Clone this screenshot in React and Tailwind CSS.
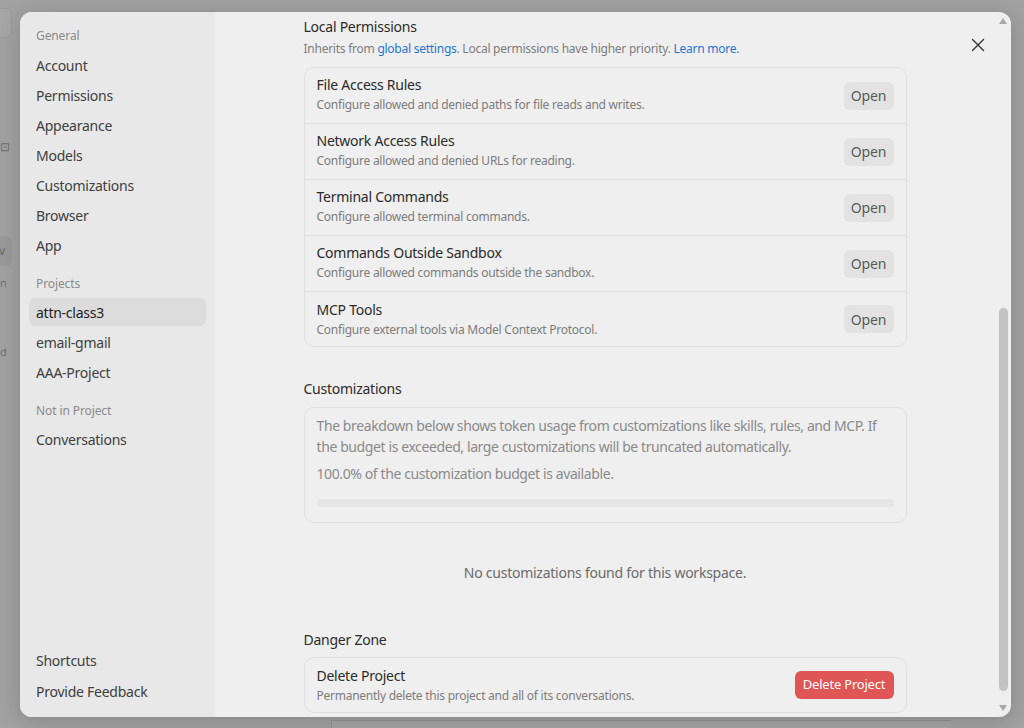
import React from "react";

const FONT = { fontFamily: '"Noto Sans", "Open Sans", sans-serif' };

function NavItem({ label, active }) {
  return (
    <div
      className={
        "h-7 flex items-center px-[7px] rounded-md text-[14px] tracking-[-0.25px] " +
        (active ? "bg-[#dcdcdc] text-[#222222]" : "text-[#404040]")
      }
    >
      {label}
    </div>
  );
}

function NavLabel({ label, first }) {
  return (
    <div
      className={
        "h-[22px] flex items-center px-[7px] text-[12px] text-[#8a8a8a] tracking-[-0.1px] " +
        (first ? "mb-1" : "mt-[14px] mb-[3px]")
      }
    >
      {label}
    </div>
  );
}

function Row({ title, desc, last, action }) {
  return (
    <div
      className={
        "flex items-center justify-between px-3 " +
        (last ? "h-[54px]" : "h-[56px] border-b border-[#e0e0e0]")
      }
    >
      <div className={"flex flex-col " + (last ? "" : "mb-[3px]")}>
        <div className="h-5 leading-5 text-[14px] text-[#2b2b2b] tracking-[-0.25px]">{title}</div>
        <div className="h-4 leading-4 mt-[2px] text-[12px] text-[#7d7d7d] tracking-[-0.25px]">
          {desc}
        </div>
      </div>
      {action}
    </div>
  );
}

function OpenBtn() {
  return (
    <div className="w-[50px] h-7 rounded-md bg-[#e2e2e2] flex items-center justify-center text-[14px] text-[#5a5a5a] tracking-[-0.2px]">
      Open
    </div>
  );
}

export default function App() {
  const rows = [
    ["File Access Rules", "Configure allowed and denied paths for file reads and writes."],
    ["Network Access Rules", "Configure allowed and denied URLs for reading."],
    ["Terminal Commands", "Configure allowed terminal commands."],
    ["Commands Outside Sandbox", "Configure allowed commands outside the sandbox."],
    ["MCP Tools", "Configure external tools via Model Context Protocol."],
  ];
  return (
    <div className="relative w-[1024px] h-[728px] overflow-hidden bg-[#a2a2a2]" style={FONT}>
      {/* underlying app fragments */}
      <div className="absolute left-[-20px] top-[8px] w-[32px] h-[30px] rounded-md border border-[#9a9a9a] bg-[#a6a6a6]" />
      <div className="absolute left-[0px] top-[141px] text-[12px] text-[#6f6f6f] leading-none">⊡</div>
      <div className="absolute left-[-20px] top-[236px] w-[32px] h-[30px] rounded-md bg-[#999999] flex items-center justify-end pr-[7px] text-[12px] text-[#6a6a6a]">
        v
      </div>
      <div className="absolute left-0 top-[275px] text-[11px] text-[#707070]">n</div>
      <div className="absolute left-0 top-[344px] text-[11px] text-[#707070]">d</div>
      <div className="absolute left-[331px] top-[720px] w-[620px] h-[30px] border-l border-t border-[#939393] bg-[#a5a5a5]" />

      {/* modal */}
      <div className="absolute left-[20px] top-[12px] w-[991px] h-[705px] rounded-xl overflow-hidden flex bg-[#efefef] shadow-[0_4px_24px_rgba(0,0,0,0.18)]">
        {/* sidebar */}
        <div className="w-[195px] bg-[#e8e8e8] flex flex-col justify-between px-[9px] pt-[13px] pb-[12px]">
          <div className="flex flex-col">
            <NavLabel label="General" first />
            <div className="flex flex-col gap-[2px]">
              <NavItem label="Account" />
              <NavItem label="Permissions" />
              <NavItem label="Appearance" />
              <NavItem label="Models" />
              <NavItem label="Customizations" />
              <NavItem label="Browser" />
              <NavItem label="App" />
            </div>
            <NavLabel label="Projects" />
            <div className="flex flex-col gap-[2px]">
              <NavItem label="attn-class3" active />
              <NavItem label="email-gmail" />
              <NavItem label="AAA-Project" />
            </div>
            <NavLabel label="Not in Project" />
            <NavItem label="Conversations" />
          </div>
          <div className="flex flex-col gap-[3px]">
            <NavItem label="Shortcuts" />
            <NavItem label="Provide Feedback" />
          </div>
        </div>

        {/* main */}
        <div className="relative flex-1 flex min-w-0">
          <div className="flex-1 overflow-hidden">
            <div className="w-[603px] mx-auto pt-[5px]">
              <div className="h-5 leading-5 text-[14px] text-[#2b2b2b] tracking-[-0.25px]">Local Permissions</div>
              <div className="h-4 leading-4 mt-1 text-[12px] text-[#7d7d7d] tracking-[-0.25px]">
                Inherits from <span className="text-[#1f76d2]">global settings</span>. Local
                permissions have higher priority. <span className="text-[#1f76d2]">Learn more</span>.
              </div>
              <div className="mt-[10px] rounded-[10px] border border-[#e0e0e0]">
                {rows.map((r, i) => (
                  <Row key={r[0]} title={r[0]} desc={r[1]} last={i === rows.length - 1} action={<OpenBtn />} />
                ))}
              </div>

              <div className="mt-[32px] h-5 leading-5 text-[14px] text-[#2b2b2b] tracking-[-0.25px]">Customizations</div>
              <div className="mt-[8px] rounded-[10px] border border-[#e0e0e0] px-3 pt-[7px] pb-[15px]">
                <div className="text-[14px] leading-[21px] text-[#8a8a8a] tracking-[-0.4px]">
                  The breakdown below shows token usage from customizations like skills, rules, and
                  MCP. If the budget is exceeded, large customizations will be truncated
                  automatically.
                </div>
                <div className="mt-[6px] text-[14px] leading-[21px] text-[#8a8a8a] tracking-[-0.4px]">
                  100.0% of the customization budget is available.
                </div>
                <div className="mt-[15px] h-2 rounded-full bg-[#e5e5e5]" />
              </div>

              <div className="mt-[40px] h-5 leading-5 text-center text-[14px] text-[#6b6b6b] tracking-[-0.25px]">
                No customizations found for this workspace.
              </div>

              <div className="mt-[47px] h-5 leading-5 text-[14px] text-[#2b2b2b] tracking-[-0.25px]">Danger Zone</div>
              <div className="mt-[7px] rounded-[10px] border border-[#e0e0e0]">
                <Row
                  title="Delete Project"
                  desc="Permanently delete this project and all of its conversations."
                  last
                  action={
                    <div className="w-[99px] h-7 rounded-md bg-[#e05555] flex items-center justify-center text-[13px] text-white tracking-[-0.2px]">
                      Delete Project
                    </div>
                  }
                />
              </div>
            </div>
          </div>

          {/* scrollbar */}
          <div className="w-4 flex flex-col items-center pt-[6px] pb-[6px]">
            <svg width="8" height="6" viewBox="0 0 8 6">
              <path d="M4 0 L8 6 L0 6 Z" fill="#a8a8a8" />
            </svg>
            <div className="flex-1 w-full flex justify-center pt-[284px] pb-[14px]">
              <div className="w-[9px] h-full rounded-full bg-[#c3c3c3]" />
            </div>
            <svg width="8" height="6" viewBox="0 0 8 6">
              <path d="M0 0 L8 0 L4 6 Z" fill="#a8a8a8" />
            </svg>
          </div>

          {/* close */}
          <div className="absolute right-[22px] top-[22px] w-[22px] h-[22px] flex items-center justify-center text-[#333333]">
            <svg width="22" height="22" viewBox="0 0 24 24" fill="none" stroke="currentColor" strokeWidth="1.5" strokeLinecap="round">
              <path d="M18 6 6 18M6 6l12 12" />
            </svg>
          </div>
        </div>
      </div>
    </div>
  );
}
